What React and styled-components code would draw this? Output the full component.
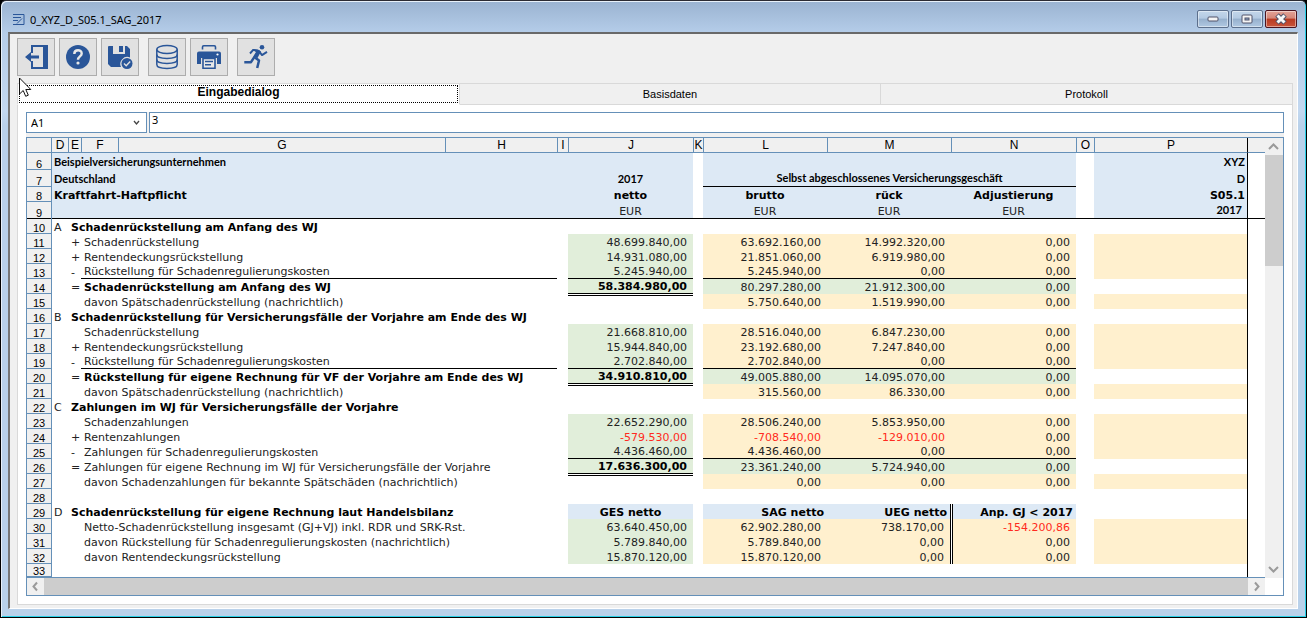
import React, { useState } from 'react';
import styled, { createGlobalStyle, css } from 'styled-components';

const GlobalStyle = createGlobalStyle`
  * {
    box-sizing: border-box;
  }

  body {
    margin: 0;
    background: #000;
    font-family: "Liberation Sans", Arial, sans-serif;
    color: #000;
  }
`;

const fills = {
  blue: '#dde9f5',
  green: '#e1eeda',
  yellow: '#fff0ce',
};

const Window = styled.div`
  display: flex;
  flex-direction: column;
  height: 100vh;
  padding: 0 8px 8px 7px;
  background: linear-gradient(#9ab3d1, #b5cde9 32px, #c3d8f0 110px, #b9d1ea 125px);
  border: 1px solid #000;
  border-top-color: #2b2b33;
  border-radius: 6px 6px 0 0;
  box-shadow: inset 1px 1px 0 #e8f1fa, inset -1px -1px 0 #28cfe6;
`;

const TitleBar = styled.header`
  display: flex;
  flex: none;
  align-items: center;
  height: 31px;
  padding: 5px 1px 0 4px;
`;

const Title = styled.h1`
  flex: 1;
  margin: 0 0 0 5px;
  font: 400 11px "Noto Sans", sans-serif;
`;

const WindowButtons = styled.div`
  display: flex;
  gap: 2px;
`;

const WindowButton = styled.button`
  display: flex;
  align-items: center;
  justify-content: center;
  width: 32px;
  height: 18px;
  padding: 0;
  border: 1px solid ${p => (p.$close ? '#4b1420' : '#5c6f8c')};
  border-radius: 2px;
  background: ${p => (p.$close
    ? 'linear-gradient(#e3a397, #d58678 45%, #b83a22 50%, #c9553c)'
    : 'linear-gradient(#c3d6ea, #b4cae2 45%, #96b0cd 50%, #b0c8e2)')};
  box-shadow: inset 0 0 0 1px rgba(255, 255, 255, 0.45);
`;

const Client = styled.main`
  display: flex;
  flex: 1;
  flex-direction: column;
  min-height: 0;
  padding: 4px 4px 3px 7px;
  background: #f0f0f0;
  border: 1px solid #646464;
  border-width: 2px 1px 1px 2px;
  border-color: #696969 #fff #fff #777;
`;

const Toolbar = styled.nav`
  display: flex;
  flex: none;
  gap: 4px;
`;

const ToolGroup = styled.div`
  display: flex;
  gap: 4px;
  margin-right: 5px;
`;

const ToolButton = styled.button`
  width: 38px;
  height: 38px;
  padding: 0;
  border: 1px solid #adadad;
  background: #e1e1e1;
  color: #2a5699;

  svg {
    display: block;
  }
`;

const Tabs = styled.div`
  display: flex;
  flex: none;
  height: 22px;
  margin-top: 7px;
`;

const Tab = styled.button`
  flex: ${p => p.$grow} 1 0;
  padding: 0;
  border: 1px solid #d9d9d9;
  border-left-width: ${p => (p.$active ? '1px' : '0')};
  background: #f0f0f0;
  font: 400 11px "Liberation Sans", Arial, sans-serif;
  color: #000;

  ${p => p.$active && css`
    padding-bottom: 4px;
    border-bottom-color: #fff;
    background: #fff;
    font-size: 12px;
    font-weight: 700;
    outline: 1px dotted #000;
    outline-offset: -3px;
  `}
`;

const Panel = styled.section`
  display: flex;
  flex: 1;
  flex-direction: column;
  min-height: 0;
  padding: 7px 8px 8px;
  border: 1px solid #d9d9d9;
  border-top: 0;
  background: #fff;
`;

const FormulaBar = styled.div`
  display: flex;
  flex: none;
  height: 21px;
  background: #f0f0f0;
`;

const NameBox = styled.div`
  display: flex;
  position: relative;
  width: 121px;
  margin-right: 2px;
  border: 1px solid #6590b8;

  select {
    flex: 1;
    padding: 0 4px;
    border: 0;
    appearance: none;
    background: #fff;
    font: 400 11px "Noto Sans", sans-serif;
    color: #000;
  }

  svg {
    position: absolute;
    top: 7px;
    right: 6px;
    pointer-events: none;
  }
`;

const FormulaInput = styled.input`
  flex: 1;
  min-width: 0;
  padding: 0 2px 5px;
  border: 1px solid #6590b8;
  background: #fff;
  font: 400 11px/14px "Noto Sans", sans-serif;
  color: #000;
`;

const SheetGap = styled.div`
  flex: none;
  height: 4px;
  background: #f0f0f0;
`;

const Sheet = styled.div`
  display: grid;
  flex: 1;
  grid-template-columns: 1fr 18px;
  grid-template-rows: 1fr 17px;
  min-height: 0;
  border: 1px solid #6590b8;
`;

const GridView = styled.div`
  overflow: hidden;
  border-bottom: 1px solid #6590b8;
`;

const Table = styled.table`
  width: 100%;
  table-layout: fixed;
  border-collapse: separate;
  border-spacing: 0;
  font: 400 11px/12px "DejaVu Sans", Verdana, sans-serif;
`;

const NumberCol = styled.col`
  width: 24px;
`;

const SizedCol = styled.col`
  width: ${p => (p.$width ? `${p.$width}px` : 'auto')};
`;

const ColumnHead = styled.th`
  height: 15px;
  padding: 0;
  border-bottom: 1px solid #6590b8;
  border-left: 1px solid ${p => (p.$edge ? '#000' : '#6590b8')};
  background: #f0f0f0;
  font: 400 12px/14px "Liberation Sans", Arial, sans-serif;

  &:first-child {
    border-left: 0;
  }
`;

// the blue line right of the row numbers lies over the first column
const RowHead = styled.th`
  position: relative;
  padding: 0;
  border-bottom: 1px solid ${p => (p.$frozen ? '#000' : '#6590b8')};
  background: #f0f0f0;
  box-shadow: 1px 0 0 #6590b8;
  font: 400 11px/9px "Liberation Sans", Arial, sans-serif;
  vertical-align: bottom;
`;

const Row = styled.tr`
  height: ${p => p.$height}px;
`;

const paddings = {
  left: () => '0 0 0 3px',
  center: () => '0',
  right: inset => `0 ${inset || 6}px 0 0`,
};

const Cell = styled.td`
  padding: ${p => paddings[p.$align || 'left'](p.$inset)};
  background: ${p => fills[p.$fill] || '#fff'};
  color: ${p => (p.$negative ? '#ff2a20' : '#222')};
  text-align: ${p => p.$align || 'left'};
  vertical-align: bottom;
  white-space: nowrap;

  ${p => p.$bold && css`
    font-weight: 700;
    color: #000;
  `}
  ${p => p.$bottom && css`border-bottom: 1px solid #000;`}
  ${p => p.$right && css`border-right: 1px solid #000;`}
  ${p => p.$edge && css`border-left: 1px solid #000;`}
  ${p => p.$double && css`background: linear-gradient(#fff 1px, #000 1px, #000 2px, #fff 2px);`}
  ${p => p.$afterDouble && css`
    border-left: 1px solid #fff;
    box-shadow: inset 1px 0 0 #000;
  `}
`;

const HeadLine = styled.span`
  display: block;
  font: 700 11px/16px Lato, Calibri, sans-serif;
  color: #000;
`;

const ScrollColumn = styled.div`
  display: flex;
  flex-direction: column;
  background: #f0f0f0;
`;

const ScrollRow = styled.div`
  display: flex;
  background: #f0f0f0;
`;

const ScrollArrow = styled.button`
  display: flex;
  flex: none;
  align-items: center;
  justify-content: center;
  width: 17px;
  height: 17px;
  padding: 0;
  border: 0;
  background: #f0f0f0;
`;

const Thumb = styled.div`
  flex: ${p => p.$share} 1 0;
  background: #cdcdcd;
`;

const Track = styled.div`
  flex: ${p => p.$share} 1 0;
`;

const Pointer = styled.svg`
  position: absolute;
  top: 77px;
  left: 18px;
  pointer-events: none;
`;

const columns = [
  ['D', 17], ['E', 13], ['F', 37], ['G', null], ['H', 112], ['I', 11], ['J', 125], ['K', 10],
  ['L', 124], ['M', 124], ['N', 125], ['O', 18], ['P', 153], ['', 18],
];

// v and heads hold the columns J, L, M, N
const rows = [
  { no: 10, mark: 'A', title: 'Schadenrückstellung am Anfang des WJ' },
  { no: 11, sign: '+', text: 'Schadenrückstellung', v: ['48.699.840,00', '63.692.160,00', '14.992.320,00', '0,00'] },
  { no: 12, sign: '+', text: 'Rentendeckungsrückstellung', v: ['14.931.080,00', '21.851.060,00', '6.919.980,00', '0,00'] },
  { no: 13, sign: '-', text: 'Rückstellung für Schadenregulierungskosten', last: true, ruled: true, v: ['5.245.940,00', '5.245.940,00', '0,00', '0,00'] },
  { no: 14, sign: '=', text: 'Schadenrückstellung am Anfang des WJ', sum: true, bold: true, v: ['58.384.980,00', '80.297.280,00', '21.912.300,00', '0,00'] },
  { no: 15, text: 'davon Spätschadenrückstellung (nachrichtlich)', note: true, v: ['', '5.750.640,00', '1.519.990,00', '0,00'] },
  { no: 16, mark: 'B', title: 'Schadenrückstellung für Versicherungsfälle der Vorjahre am Ende des WJ' },
  { no: 17, text: 'Schadenrückstellung', v: ['21.668.810,00', '28.516.040,00', '6.847.230,00', '0,00'] },
  { no: 18, sign: '+', text: 'Rentendeckungsrückstellung', v: ['15.944.840,00', '23.192.680,00', '7.247.840,00', '0,00'] },
  { no: 19, sign: '-', text: 'Rückstellung für Schadenregulierungskosten', last: true, ruled: true, v: ['2.702.840,00', '2.702.840,00', '0,00', '0,00'] },
  { no: 20, sign: '=', text: 'Rückstellung für eigene Rechnung für VF der Vorjahre am Ende des WJ', sum: true, bold: true, v: ['34.910.810,00', '49.005.880,00', '14.095.070,00', '0,00'] },
  { no: 21, text: 'davon Spätschadenrückstellung (nachrichtlich)', note: true, v: ['', '315.560,00', '86.330,00', '0,00'] },
  { no: 22, mark: 'C', title: 'Zahlungen im WJ für Versicherungsfälle der Vorjahre' },
  { no: 23, text: 'Schadenzahlungen', v: ['22.652.290,00', '28.506.240,00', '5.853.950,00', '0,00'] },
  { no: 24, sign: '+', text: 'Rentenzahlungen', v: ['-579.530,00', '-708.540,00', '-129.010,00', '0,00'] },
  { no: 25, sign: '-', text: 'Zahlungen für Schadenregulierungskosten', last: true, v: ['4.436.460,00', '4.436.460,00', '0,00', '0,00'] },
  { no: 26, sign: '=', text: 'Zahlungen für eigene Rechnung im WJ für Versicherungsfälle der Vorjahre', sum: true, v: ['17.636.300,00', '23.361.240,00', '5.724.940,00', '0,00'] },
  { no: 27, text: 'davon Schadenzahlungen für bekannte Spätschäden (nachrichtlich)', note: true, v: ['', '0,00', '0,00', '0,00'] },
  { no: 28 },
  { no: 29, mark: 'D', title: 'Schadenrückstellung für eigene Rechnung laut Handelsbilanz', heads: ['GES netto', 'SAG netto', 'UEG netto', 'Anp. GJ < 2017'], split: true },
  { no: 30, text: 'Netto-Schadenrückstellung insgesamt (GJ+VJ) inkl. RDR und SRK-Rst.', split: true, v: ['63.640.450,00', '62.902.280,00', '738.170,00', '-154.200,86'] },
  { no: 31, text: 'davon Rückstellung für Schadenregulierungskosten (nachrichtlich)', split: true, v: ['5.789.840,00', '5.789.840,00', '0,00', '0,00'] },
  { no: 32, text: 'davon Rentendeckungsrückstellung', split: true, v: ['15.870.120,00', '15.870.120,00', '0,00', '0,00'] },
  { no: 33, height: 13 },
];

const Chevron = ({ d }) => (
  <svg width="11" height="11" viewBox="0 0 11 11" fill="none" stroke="#9a9a9a" strokeWidth="2">
    <path d={d}/>
  </svg>
);

const Icon = ({ children }) => (
  <svg width="36" height="36" viewBox="0 0 36 36" fill="none" stroke="currentColor" strokeWidth="2">
    {children}
  </svg>
);

const ExitIcon = () => (
  <Icon>
    <path fill="currentColor" stroke="none" d="M13 6h17v24H13v-8h2v6h10V8H15v6h-2z"/>
    <path fill="currentColor" stroke="none" d="M7 18l6-5v3.500h8v3h-8V23z"/>
  </Icon>
);

const HelpIcon = () => (
  <Icon>
    <circle cx="18" cy="18" r="12" fill="currentColor" stroke="none"/>
    <path d="M14.300 15c0-5 7.400-4.800 7.400-.6 0 2.900-3.700 3-3.700 6.300" stroke="#e8e8e8" strokeWidth="2.400"/>
    <circle cx="18" cy="24" r="1.600" fill="#e8e8e8" stroke="none"/>
  </Icon>
);

const SaveIcon = () => (
  <Icon>
    <path fill="currentColor" stroke="none" d="M7 7h4v8h12V7h2l3 3v8.500a7 7 0 0 0-9 9.500H9l-3-3V8q0-1 1-1z"/>
    <path fill="currentColor" stroke="none" d="M17 7h4v6h-4z"/>
    <circle cx="25" cy="24.500" r="5.500" fill="currentColor" stroke="none"/>
    <path d="M22 24.500l2.200 2.200 4-4.200" stroke="#e1e1e1" strokeWidth="1.400"/>
  </Icon>
);

const DatabaseIcon = () => (
  <Icon>
    <g strokeWidth="1.500">
      <ellipse cx="18" cy="10.500" rx="10.200" ry="4"/>
      <path d="M7.800 10.500v15c0 5.200 20.400 5.200 20.400 0v-15"/>
      <path d="M7.800 15.500c0 5.200 20.400 5.200 20.400 0M7.800 20.500c0 5.200 20.400 5.200 20.400 0"/>
    </g>
  </Icon>
);

const PrinterIcon = () => (
  <Icon>
    <path d="M11.500 10.500V8q0-1.200 1.200-1.200h10.600q1.200 0 1.200 1.200v2.500" strokeWidth="1.600"/>
    <path fill="currentColor" stroke="none" d="M8 12.500h20q2 0 2 2V25h-4v-6H10v6H6V14.500q0-2 2-2z"/>
    <path fill="#e8e8e8" strokeWidth="1.600" d="M12 19.500h12v9.700H12z"/>
    <path d="M14 22.500h8M14 25.800h6" strokeWidth="1.500"/>
    <circle cx="26.500" cy="15.500" r="1.100" fill="#fff" stroke="none"/>
  </Icon>
);

const RunIcon = () => (
  <Icon>
    <circle cx="24" cy="8.300" r="2.300" fill="currentColor" stroke="none"/>
    <path fill="currentColor" stroke="none" d="M14 10l6 .5 3 2-3.500 6.500-4-1.500 3-4z"/>
    <path d="M12 14.500l3.200-3.600 5.800 1.200 3 4 5-3.200" strokeWidth="1.900" strokeLinejoin="round"/>
    <path d="M19.500 13l-3.700 5.800-2.800 4.400H6.300" strokeWidth="2.500" strokeLinejoin="round"/>
    <path d="M17 18.500l4 3-1.800 7.500" strokeWidth="2.500" strokeLinejoin="round"/>
  </Icon>
);

const NumberedRow = ({ no, height, frozen, children }) => (
  <Row $height={height}>
    <RowHead scope="row" $frozen={frozen}>{no}</RowHead>
    {children}
  </Row>
);

const SheetHeader = () => (
  <>
    <NumberedRow no={6} height={17}>
      <Cell colSpan={7} $fill="blue"><HeadLine>Beispielversicherungsunternehmen</HeadLine></Cell>
      <Cell/>
      <Cell colSpan={3} $fill="blue"/>
      <Cell/>
      <Cell $fill="blue" $align="right" $inset={2}><HeadLine>XYZ</HeadLine></Cell>
      <Cell $edge/>
    </NumberedRow>
    <NumberedRow no={7} height={17}>
      <Cell colSpan={6} $fill="blue"><HeadLine>Deutschland</HeadLine></Cell>
      <Cell $fill="blue" $align="center"><HeadLine>2017</HeadLine></Cell>
      <Cell/>
      <Cell colSpan={3} $fill="blue" $align="center" $bottom><HeadLine>Selbst abgeschlossenes Versicherungsgeschäft</HeadLine></Cell>
      <Cell/>
      <Cell $fill="blue" $align="right" $inset={2}><HeadLine>D</HeadLine></Cell>
      <Cell $edge/>
    </NumberedRow>
    <NumberedRow no={8} height={15}>
      <Cell colSpan={6} $fill="blue" $bold>Kraftfahrt-Haftpflicht</Cell>
      <Cell $fill="blue" $align="center" $bold>netto</Cell>
      <Cell/>
      <Cell $fill="blue" $align="center" $bold>brutto</Cell>
      <Cell $fill="blue" $align="center" $bold>rück</Cell>
      <Cell $fill="blue" $align="center" $bold>Adjustierung</Cell>
      <Cell/>
      <Cell $fill="blue" $align="right" $inset={2} $bold>S05.1</Cell>
      <Cell $edge/>
    </NumberedRow>
    <NumberedRow no={9} height={17} frozen>
      <Cell colSpan={6} $fill="blue" $bottom/>
      <Cell $fill="blue" $align="center" $bottom>EUR</Cell>
      <Cell $bottom/>
      <Cell $fill="blue" $align="center" $bottom>EUR</Cell>
      <Cell $fill="blue" $align="center" $bottom>EUR</Cell>
      <Cell $fill="blue" $align="center" $bottom>EUR</Cell>
      <Cell $bottom/>
      <Cell $fill="blue" $align="right" $inset={5} $bottom><HeadLine>2017</HeadLine></Cell>
      <Cell $edge $bottom/>
    </NumberedRow>
  </>
);

const DataRow = ({ row }) => {
  const { no, height = 15, mark, sign, title, text, sum, bold, note, last, ruled, heads, split, v } = row;
  const values = heads || v || [];
  const fillFor = i => {
    if (heads) return 'blue';
    if (!v) return null;
    if (i === 0) return note ? null : 'green';
    return sum ? 'green' : 'yellow';
  };

  return (
    <NumberedRow no={no} height={height}>
      <Cell>{mark}</Cell>
      {title ? <Cell colSpan={4} $bold>{title}</Cell> : (
        <>
          <Cell>{sign}</Cell>
          <Cell colSpan={3} $bold={bold} $bottom={ruled}>{text}</Cell>
        </>
      )}
      <Cell/>
      {[0, 1, 2, 3].map(i => (
        <React.Fragment key={i}>
          <Cell
            $align={heads && i === 0 ? 'center' : 'right'}
            $inset={heads ? 3 : 6}
            $fill={fillFor(i)}
            $bold={heads || (sum && i === 0)}
            $negative={values[i] && values[i][0] === '-'}
            $bottom={last || (sum && i === 0)}
            $double={note && i === 0}
            $right={split && i === 2}
            $afterDouble={split && i === 3}
          >
            {values[i]}
          </Cell>
          {i === 0 && <Cell/>}
        </React.Fragment>
      ))}
      <Cell/>
      <Cell $fill={v && !sum ? 'yellow' : null}/>
      <Cell $edge/>
    </NumberedRow>
  );
};

const App = () => {
  const [tab, setTab] = useState('Eingabedialog');
  const [formula, setFormula] = useState('3');
  const tabs = [['Eingabedialog', 442], ['Basisdaten', 421], ['Protokoll', 412]];

  return (
    <>
      <GlobalStyle/>
      <Window>
        <TitleBar>
          <svg width="13" height="13" viewBox="0 0 13 13" fill="none" stroke="#2a5699">
            <path d="M1 1.500h11v10M1 4.500h8M1 7.500h5M1 11.500h11M5 10.500l5-5"/>
          </svg>
          <Title>0_XYZ_D_S05.1_SAG_2017</Title>
          <WindowButtons>
            <WindowButton aria-label="Minimieren">
              <svg width="12" height="6"><rect x="1" y="1" width="10" height="4" rx="1" fill="#f4f4f4" stroke="#50536a"/></svg>
            </WindowButton>
            <WindowButton aria-label="Maximieren">
              <svg width="12" height="10">
                <rect x="1" y="1" width="10" height="8" rx="1" fill="#f4f4f4" stroke="#50536a"/>
                <rect x="4" y="4" width="4" height="2" fill="#8ea9c8" stroke="#50536a"/>
              </svg>
            </WindowButton>
            <WindowButton $close aria-label="Schließen">
              <svg width="14" height="12" fill="none">
                <path d="M3 2l8 8M11 2l-8 8" stroke="#50536a" strokeWidth="5"/>
                <path d="M3.500 2.500l7 7M10.500 2.500l-7 7" stroke="#f8f8f8" strokeWidth="3"/>
              </svg>
            </WindowButton>
          </WindowButtons>
        </TitleBar>
        <Client>
          <Toolbar>
            <ToolGroup>
              <ToolButton aria-label="Beenden"><ExitIcon/></ToolButton>
              <ToolButton aria-label="Hilfe"><HelpIcon/></ToolButton>
              <ToolButton aria-label="Speichern"><SaveIcon/></ToolButton>
            </ToolGroup>
            <ToolGroup>
              <ToolButton aria-label="Datenbank"><DatabaseIcon/></ToolButton>
              <ToolButton aria-label="Drucken"><PrinterIcon/></ToolButton>
            </ToolGroup>
            <ToolButton aria-label="Ausführen"><RunIcon/></ToolButton>
          </Toolbar>
          <Tabs role="tablist">
            {tabs.map(([name, grow]) => (
              <Tab key={name} role="tab" aria-selected={tab === name} $active={tab === name} $grow={grow} onClick={() => setTab(name)}>
                {name}
              </Tab>
            ))}
          </Tabs>
          <Panel>
            <FormulaBar>
              <NameBox>
                <select aria-label="Zelle" defaultValue="A1">
                  <option>A1</option>
                </select>
                <svg width="7" height="6" fill="none" stroke="#444" strokeWidth="1.300"><path d="M1 1l2.500 3L6 1"/></svg>
              </NameBox>
              <FormulaInput aria-label="Inhalt" value={formula} onChange={e => setFormula(e.target.value)}/>
            </FormulaBar>
            <SheetGap/>
            <Sheet>
              <GridView>
                <Table>
                  <colgroup>
                    <NumberCol/>
                    {columns.map(([name, width]) => <SizedCol key={name} $width={width}/>)}
                  </colgroup>
                  <thead>
                    <tr>
                      <ColumnHead/>
                      {columns.map(([name]) => <ColumnHead key={name} scope="col" $edge={!name}>{name}</ColumnHead>)}
                    </tr>
                  </thead>
                  <tbody>
                    <SheetHeader/>
                    {rows.map(row => <DataRow key={row.no} row={row}/>)}
                  </tbody>
                </Table>
              </GridView>
              <ScrollColumn>
                <ScrollArrow aria-label="Nach oben"><Chevron d="M1 8l4.500-4.500L10 8"/></ScrollArrow>
                <Thumb $share={111}/>
                <Track $share={295}/>
                <ScrollArrow aria-label="Nach unten"><Chevron d="M1 3l4.500 4.500L10 3"/></ScrollArrow>
              </ScrollColumn>
              <ScrollRow>
                <ScrollArrow aria-label="Nach links"><Chevron d="M7 1.500L3.500 5.500 7 9.500"/></ScrollArrow>
                <Thumb $share={1}/>
                <ScrollArrow aria-label="Nach rechts"><Chevron d="M4 1.500l3.500 4L4 9.500"/></ScrollArrow>
              </ScrollRow>
            </Sheet>
          </Panel>
        </Client>
      </Window>
      <Pointer width="14" height="22" viewBox="0 0 14 22">
        <path d="M1.500 1v16l3.700-3.500 2.500 5.800 2.600-1.100-2.500-5.700h5z" fill="#fff" stroke="#111"/>
      </Pointer>
    </>
  );
};

export default App;
